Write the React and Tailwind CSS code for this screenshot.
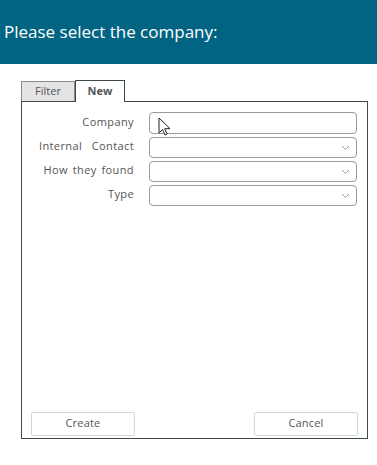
const font = { fontFamily: '"Open Sans", Tahoma, sans-serif' }

function Chevron() {
  return (
    <svg width="9" height="6" viewBox="0 0 9 6" fill="none" aria-hidden="true">
      <path d="M1 1l3.5 3.5L8 1" stroke="#a0a0a0" strokeWidth="1" />
    </svg>
  )
}

function Cursor() {
  return (
    <svg width="14" height="20" viewBox="0 0 14 20" aria-hidden="true" className="absolute left-[8px] top-[4px]">
      <path
        d="M1 1v15l3.5-3.5 2.5 5.5 2.2-1-2.5-5.3H12z"
        fill="#fff"
        stroke="#222"
        strokeWidth="1"
        strokeLinejoin="round"
      />
    </svg>
  )
}

const label =
  'w-[113px] text-right text-[11px] text-[#555] pr-[1px] -mt-[2px] whitespace-pre tracking-[0.4px] [word-spacing:1.5px]'

function Row({ name, select, tall, children }) {
  return (
    <div className={`flex items-center gap-[14px] ${tall ? 'h-[22px]' : 'h-[21px]'}`}>
      <span className={label}>{name}</span>
      <div className="relative flex-1 h-full rounded-[4px] border border-[#9a9a9a] bg-white flex items-center justify-end pr-[6px]">
        {select && <Chevron />}
        {children}
      </div>
    </div>
  )
}

const btn =
  'w-[104px] h-[24px] pb-[2px] rounded-[2px] border border-[#d6d6d6] bg-white text-[11px] text-[#555] tracking-[0.2px]'

export default function App() {
  return (
    <div className="w-[377px] h-[465px] bg-white" style={font}>
      <div className="h-[64px] bg-[#006482] flex items-center pl-[4px]">
        <h1 className="text-[17px] text-white -mt-[1px]">Please select the company:</h1>
      </div>

      <div className="pl-[21px] pr-[9px] pt-[16px]">
        {/* tab strip */}
        <div className="flex items-end h-[21px]">
          <div className="w-[54px] h-[20px] bg-[#e4e4e4] border border-[#8a8a8a] border-b-0 flex items-center justify-center text-[11px] text-[#555]">
            Filter
          </div>
          <div className="w-[50px] h-[22px] bg-white border border-[#3c4a4a] border-b-0 flex items-center justify-center text-[11px] font-bold text-[#555] -mb-[1px] relative z-10">
            New
          </div>
        </div>

        {/* panel */}
        <div className="h-[338px] border border-[#3c4a4a] flex flex-col">
          <div className="flex flex-col gap-[3px] pt-[10px] pr-[10px]">
            <Row name="Company" tall>
              <Cursor />
            </Row>
            <Row name="Internal  Contact" select />
            <Row name="How they found" select />
            <Row name="Type" select />
          </div>

          <div className="mt-auto mb-[2px] flex justify-between px-[9px]">
            <button className={btn}>Create</button>
            <button className={btn}>Cancel</button>
          </div>
        </div>
      </div>
    </div>
  )
}
